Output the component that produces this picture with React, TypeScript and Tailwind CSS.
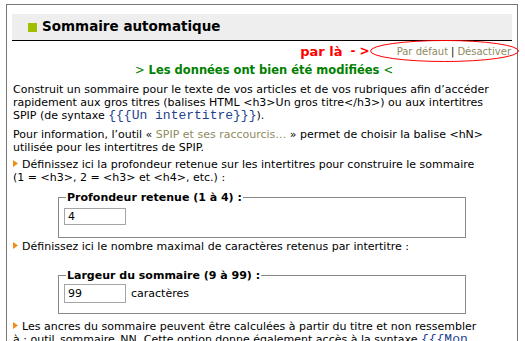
import React from 'react';

const Bullet = () => (
  <svg width="5" height="7" viewBox="0 0 5 7" className="inline-block mr-[4px] align-[1px]">
    <polygon points="0,0 5,3.5 0,7" fill="#f08c1a" />
  </svg>
);

const Code = ({ children }: { children: React.ReactNode }) => (
  <code className="font-['Liberation_Mono',monospace] text-[13px] text-[#1f3f8f]">{children}</code>
);

const App = () => {
  return (
    <div className="relative w-[525px] h-[341px] overflow-hidden bg-white pt-[4px] pl-[6px] font-['DejaVu_Sans',sans-serif] text-[11px] leading-[13px] text-black">
      {/* Outer panel */}
      <div className="w-[512px] border border-[#777] px-[5px] pt-[9px] pb-4">
        {/* Header */}
        <div className="h-[27px] bg-[#eeeeee] border-b border-black flex items-center pl-[16px]">
          <span className="w-[9px] h-[9px] bg-[#9fbf00] mr-[5px]" />
          <h2 className="font-bold text-[13.5px] leading-none">Sommaire automatique</h2>
        </div>

        {/* Links */}
        <div className="flex justify-end items-center h-[21px] pr-[1px]">
          <span className="text-[#f00] font-bold text-[13px] mr-[8px]">par là</span>
          <span className="text-[#f00] font-bold text-[12px] mr-[27px]">- &gt;</span>
          <span className="text-[10px] text-[#8f8b60]">Par défaut</span>
          <span className="text-[10px] mx-[3px]">|</span>
          <span className="text-[10px] text-[#8f8b60]">Désactiver</span>
        </div>

        <p className="text-center font-bold text-[11.5px] text-[#008000] mt-[2px] mb-[6px] ml-[4px]">
          <span className="font-normal">&gt;</span> Les données ont bien été modifiées{' '}
          <span className="font-normal">&lt;</span>
        </p>

        <div className="pl-[1px] pr-1">
          <p>
            Construit un sommaire pour le texte de vos articles et de vos rubriques afin d’accéder rapidement aux
            gros titres (balises HTML &lt;h3&gt;Un gros titre&lt;/h3&gt;) ou aux intertitres SPIP (de syntaxe{' '}
            <Code>{'{{{Un intertitre}}}'}</Code>).
          </p>
          <p className="mt-[6px]">
            Pour information, l’outil « <span className="text-[#8f8b60]">SPIP et ses raccourcis…</span> » permet de
            choisir la balise &lt;hN&gt; utilisée pour les intertitres de SPIP.
          </p>
          <p className="mt-[4px]">
            <Bullet />
            Définissez ici la profondeur retenue sur les intertitres pour construire le sommaire
            <br />
            (1 = &lt;h3&gt;, 2 = &lt;h3&gt; et &lt;h4&gt;, etc.) :
          </p>

          <fieldset className="ml-[45px] mt-[7px] w-[408px] border border-[#888] px-[5px] pb-[12px]">
            <legend className="font-bold ml-[2px] px-[1px]">Profondeur retenue (1 à 4) :</legend>
            <input
              readOnly
              value="4"
              className="mt-[4px] w-[62px] h-[17px] border border-[#a5a5a5] px-[3px] text-[11px] outline-none"
            />
          </fieldset>

          <p className="mt-[2px]">
            <Bullet />
            Définissez ici le nombre maximal de caractères retenus par intertitre :
          </p>

          <fieldset className="ml-[45px] mt-[16px] w-[408px] border border-[#888] px-[5px] pb-[10px]">
            <legend className="font-bold ml-[2px] px-[1px]">Largeur du sommaire (9 à 99) :</legend>
            <div className="flex items-center mt-[2px]">
              <input
                readOnly
                value="99"
                className="w-[62px] h-[19px] border border-[#a5a5a5] px-[3px] text-[11px] outline-none"
              />
              <span className="ml-[5px]">caractères</span>
            </div>
          </fieldset>

          <p className="mt-[6px]">
            <Bullet />
            Les ancres du sommaire peuvent être calculées à partir du titre et non ressembler
            <br />à : outil_sommaire_NN. Cette option donne également accès à la syntaxe{' '}
            <Code>{'{{{Mon titre<mon_ancre>}}}'}</Code> qui permet de choisir l’ancre utilisée.
          </p>
        </div>
      </div>

      {/* Annotation ellipse */}
      <svg className="absolute left-0 top-0 pointer-events-none" width="525" height="341">
        <ellipse cx="444.5" cy="51" rx="74" ry="10.5" fill="none" stroke="#f00" strokeWidth="1" />
      </svg>
    </div>
  );
};

export default App;
